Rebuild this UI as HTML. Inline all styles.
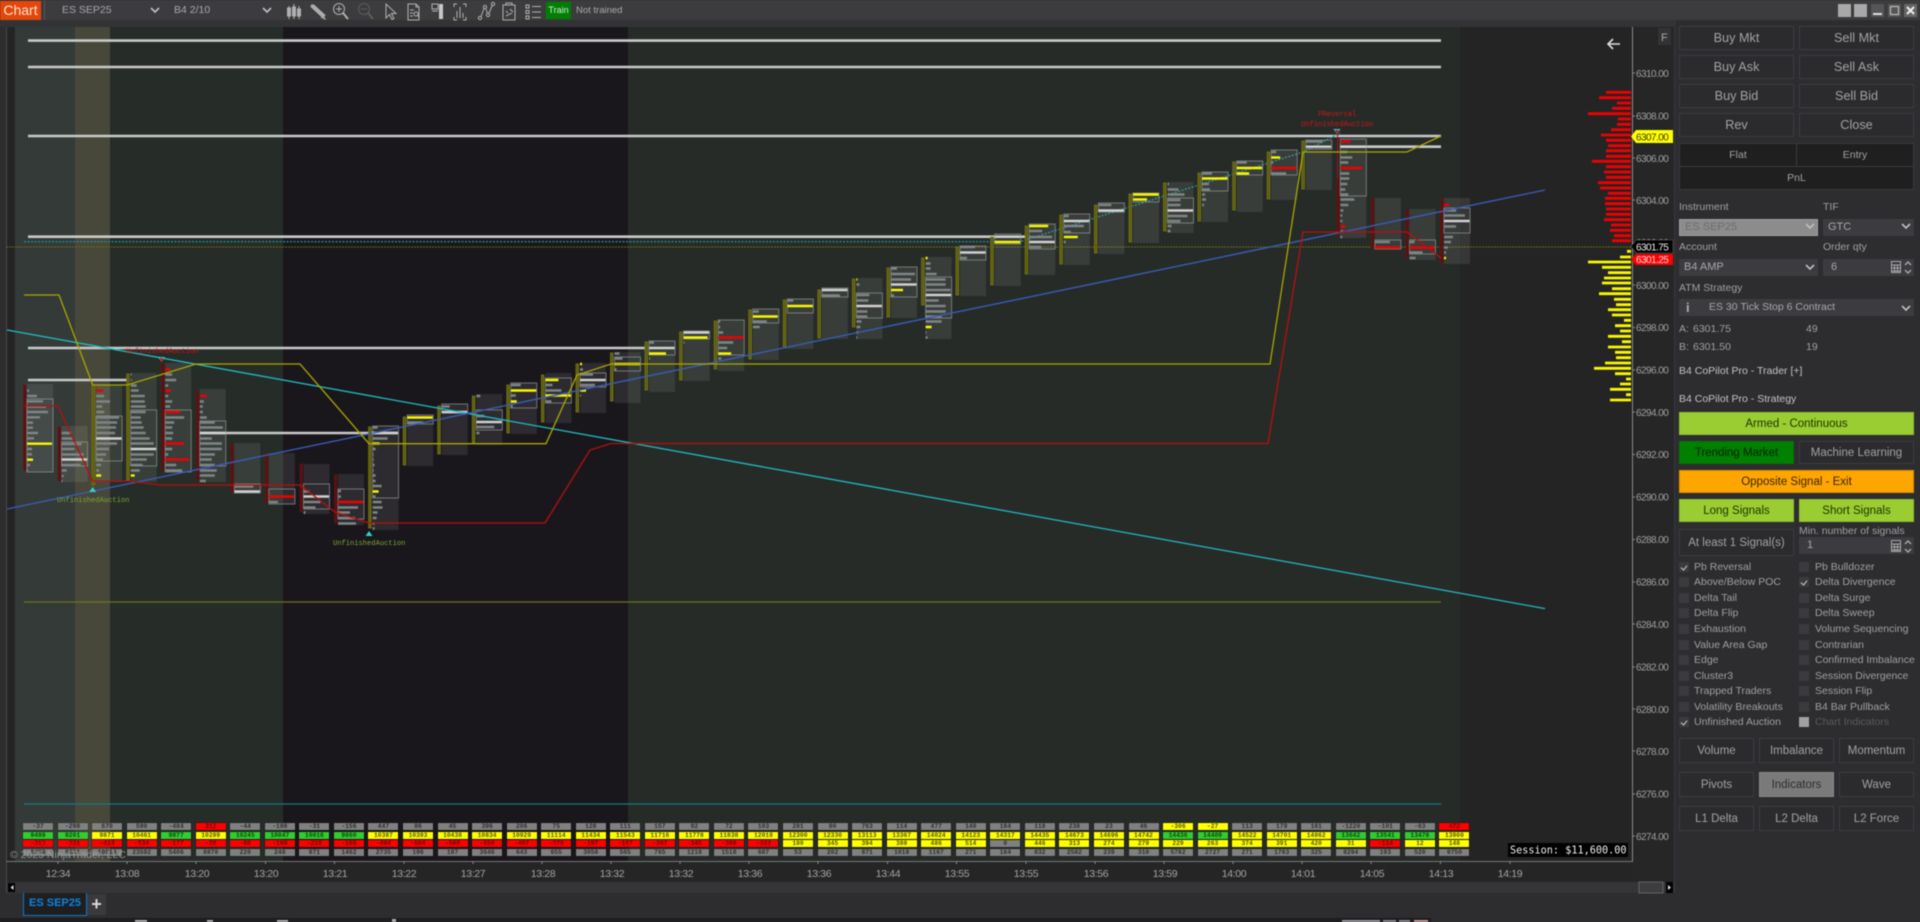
<!DOCTYPE html>
<html lang="en"><head><meta charset="utf-8"><title>Chart - ES SEP25</title>
<style>
html,body{margin:0;padding:0;background:#2d2d30;width:1920px;height:922px;overflow:hidden}
#root{position:relative;width:1920px;height:922px;overflow:hidden;font-family:"Liberation Sans",sans-serif;color:#a6a6a6;filter:blur(.45px)}
.a{position:absolute;box-sizing:border-box;white-space:nowrap}
.btn{position:absolute;box-sizing:border-box;display:flex;align-items:center;justify-content:center;background:#2b2b2e;border:1px solid #3d3d41;color:#a2a2a2;font-size:12.7px}
.s2{font-size:11.2px}
.cb{position:absolute;box-sizing:border-box;width:10px;height:10px;background:#3b3b3f}
.cb.on:after{content:"";position:absolute;left:2.5px;top:1.5px;width:3px;height:5px;border:solid #ccc;border-width:0 1.3px 1.3px 0;transform:rotate(40deg)}
.lb{position:absolute;font-size:10.5px;line-height:12px;color:#a0a0a0;white-space:nowrap}
.combo{position:absolute;box-sizing:border-box;background:#3c3c40;font-size:11px;color:#a8a8a8;line-height:16px;padding-left:5px}
.t{position:absolute;left:23px;top:823px;display:grid;grid-template-columns:repeat(42,34.56px);grid-auto-rows:8.6px}
.t i{display:block;width:30px;height:7px;font:bold 6.3px/7px "Liberation Mono",monospace;text-align:center;box-shadow:0 0 0 .5px rgba(0,0,0,.4);overflow:hidden}
.g{background:#808080;color:#2e2e2e}.n{background:#30cc30;color:#0a4a0a}.y{background:#ffff00;color:#55550a}.r{background:#ff0000;color:#6a0000}
svg text{font-family:"Liberation Sans",sans-serif}
rect.c{fill:#fff;fill-opacity:.085}
rect.b{fill:rgba(255,255,255,0);stroke:#9a9e9e;stroke-width:1;stroke-opacity:.65}
.sy{fill:#5c5c12;stroke:#77770f;stroke-width:.8}
.sr{fill:#5a1010;stroke:#701212;stroke-width:.6}
.lg,.lw,.ly,.lr{fill:none;stroke-width:2.4}
.lg{stroke:#7f8585}.lw{stroke:#d0d0d0}.ly{stroke:#f8f800}.lr{stroke:#f00000}
.pf{stroke-width:2.8}
.m{font-family:"Liberation Mono",monospace;font-size:7.1px}
.ax{font-size:10px;letter-spacing:-.55px;fill:#a0a0a0}
.tm{font-size:10.5px;letter-spacing:-.35px;fill:#a4a4a4;text-anchor:middle}
</style></head><body><div id="root">

<!-- top bar -->
<div class="a" style="left:0;top:0;width:1920px;height:20px;background:#3c3c3e"></div>
<div class="a" style="left:0;top:20px;width:1674px;height:7px;background:#333336"></div>
<div class="a" style="left:0;top:1px;width:41px;height:19px;background:#e2470c;color:#ffe2d2;font-size:14px;line-height:19px;text-align:center">Chart</div>
<div class="a" style="left:44px;top:0;width:1px;height:20px;background:#555"></div>
<div class="combo" style="left:57px;top:3px;width:107px;height:15px;line-height:15px;font-size:10.5px">ES SEP25</div>
<div class="combo" style="left:169px;top:3px;width:107px;height:15px;line-height:15px;font-size:10.5px">B4 2/10</div>
<div class="a" style="left:546px;top:2px;width:25px;height:17px;background:#008000;color:#d8e8d8;font-size:9px;line-height:17px;text-align:center">Train</div>
<div class="a" style="left:576px;top:4px;font-size:9.5px;line-height:13px;color:#aaa">Not trained</div>

<svg class="a" style="left:0;top:0" width="1920" height="922" viewBox="0 0 1920 922">
<!-- chart background -->
<rect x="6" y="27" width="1626" height="835" fill="#242424"/>
<rect x="6" y="27" width="1" height="866" fill="#4a4a4a"/>
<rect x="15" y="27" width="60" height="835" fill="#343a38"/>
<rect x="75" y="27" width="35" height="835" fill="#47483a"/>
<rect x="110" y="27" width="173" height="835" fill="#262c28"/>
<rect x="283" y="27" width="345" height="835" fill="#1a171c"/>
<rect x="628" y="27" width="832" height="835" fill="#262b28"/>
<rect x="1633" y="27" width="41" height="866" fill="#262626"/>
<rect x="7" y="862" width="1626" height="20" fill="#252525"/>
<rect x="7" y="882" width="1667" height="11" fill="#353537"/>
<rect x="1632" y="27" width="1" height="835" fill="#8a8a8a"/>
<rect x="6" y="861" width="1627" height="1" fill="#777"/>
<rect x="1674" y="20" width="1" height="873" fill="#3a3a3d"/>

<!-- long lines -->
<g stroke="#c9c9c9" stroke-width="2.6" fill="none">
<path d="M28 40.6H1441M28 67H1441M28 136H1441M1340 146.7H1441M28 236.7H1027M28 348H647M28 380H128M200 433H398"/>
</g>
<path d="M24 241.7H1020L1303 152L1340 133" stroke="#1f8a8a" stroke-width="1.4" stroke-dasharray="2 1.5" fill="none"/>
<path d="M6 247H1632" stroke="#6a6a12" stroke-width="1" stroke-dasharray="2 1"/>
<path d="M24 602H1441" stroke="#6d701f" stroke-width="1.2"/>
<path d="M24 804H1441" stroke="#127a78" stroke-width="1.3"/>

<!-- footprint bars -->
<g transform="translate(27)"><rect class="c" y="384" width="26" height="88"/><rect class="b" y="399" width="26" height="73"/><rect class="sr" x="-3.5" y="385" width="2.4" height="85"/><path class="lg" d="M0 390.7h2M0 396h10M0 401.3h16M0 406.7h19M0 412h21M0 417.3h13M0 422.7h6M0 427.7h6M0 433h11M0 438.3h7M0 449h5M0 454.3h5M0 465h3M0 470.3h1"/><path class="ly" d="M0 443.7h25M0 459.7h6"/></g>
<g transform="translate(61.6)"><rect class="c" y="426" width="26" height="56"/><rect class="b" y="442" width="26" height="24"/><rect class="sr" x="-3.5" y="427" width="2.4" height="54"/><path class="lg" d="M0 433h10M0 438.5h12M0 444h20M0 449h13M0 454.5h22M0 465h19M0 470.5h5M0 476h2M0 481h1"/><path class="lw" d="M0 459.5h25.5"/></g>
<g transform="translate(96.1)"><rect class="c" y="385" width="26" height="97"/><rect class="b" y="416" width="26" height="45"/><rect class="sy" x="-4" y="385" width="2.6" height="100"/><path class="lg" d="M0 396h8M0 401.5h14M0 406.5h6M0 412h8M0 417.5h23M0 422.5h21M0 427.5h20M0 433h19M0 443.5h21M0 449h13M0 454.5h10M0 459.5h7M0 465h5M0 470.5h3"/><path class="lr" d="M0 390.5h7"/><path class="lw" d="M0 438.5h25.5"/><path class="ly" d="M0 475.5h5"/></g>
<g transform="translate(130.7)"><rect class="c" y="373" width="26" height="109"/><rect class="b" y="410" width="26" height="56"/><rect class="sy" x="-4" y="374" width="2.6" height="106"/><path class="lg" d="M0 374.5h1M0 380h1M0 385.5h6M0 390.5h8M0 396h14M0 401.5h14M0 406.5h15M0 412h15M0 417.5h10M0 422.5h11M0 427.5h13M0 433h15M0 438.5h19M0 443.5h23M0 454.5h23M0 459.5h16M0 465h12M0 470.5h9"/><path class="lw" d="M0 449h25.5"/><path class="ly" d="M0 475.5h4"/></g>
<g transform="translate(165.2)"><rect class="c" y="363" width="26" height="109"/><rect class="b" y="410" width="26" height="62"/><rect class="sr" x="-3.5" y="363" width="2.4" height="107"/><path class="lg" d="M0 374.5h7M0 380h11M0 385.5h3M0 396h3M0 401.5h7M0 406.5h5M0 417.5h19M0 422.5h9M0 427.5h7M0 433h8M0 438.5h7M0 449h7M0 454.5h3M0 465h11M0 470.5h17"/><path class="lr" d="M0 369.5h5M0 390.5h6M0 412h15M0 443.5h19M0 459.5h24"/></g>
<g transform="translate(199.8)"><rect class="c" y="389" width="26" height="93"/><rect class="b" y="421" width="26" height="45"/><rect class="sr" x="-3.5" y="391" width="2.4" height="90"/><path class="lg" d="M0 401.5h4M0 406.5h3M0 412h3M0 417.5h7M0 422.5h15M0 427.5h23M0 438.5h12M0 443.5h22M0 449h22M0 454.5h15M0 459.5h12M0 465h15M0 470.5h17M0 475.5h15M0 481h6"/><path class="lr" d="M0 396h7"/><path class="lw" d="M0 433h25.5"/></g>
<g transform="translate(234.4)"><rect class="c" y="443" width="26" height="50"/><rect class="b" y="484" width="26" height="9"/><rect class="sr" x="-3.5" y="443" width="2.4" height="49"/><path class="lg" d="M0 486.5h19"/><path class="lw" d="M0 491.5h25.5"/></g>
<g transform="translate(268.9)"><rect class="c" y="453" width="26" height="51"/><rect class="b" y="489" width="26" height="15"/><rect class="sr" x="-3.5" y="454" width="2.4" height="48"/><path class="lg" d="M0 502h9"/><path class="lr" d="M0 496.5h25.5"/></g>
<g transform="translate(303.5)"><rect class="c" y="464" width="26" height="50"/><rect class="b" y="484" width="26" height="25"/><rect class="sr" x="-3.5" y="464" width="2.4" height="48"/><path class="lg" d="M0 491.5h6M0 502h17M0 507.5h12M0 512.5h2"/><path class="lw" d="M0 496.5h25.5"/></g>
<g transform="translate(338)"><rect class="c" y="474" width="26" height="51"/><rect class="b" y="489" width="26" height="30"/><rect class="sr" x="-3.5" y="475" width="2.4" height="48"/><path class="lg" d="M0 491h3M0 496.5h3M0 507.5h20M0 512.5h12M0 518h17M0 523.5h18"/><path class="lr" d="M0 502h25.5"/></g>
<g transform="translate(372.6)"><rect class="c" y="426" width="26" height="104"/><rect class="b" y="426" width="26" height="72"/><rect class="sy" x="-4" y="427" width="2.6" height="101"/><path class="lg" d="M0 427.5h5M0 438.5h15M0 449h3M0 454.5h1M0 459.5h1M0 465h2M0 470.5h1M0 475.5h3M0 481h3M0 486h9M0 496.5h3M0 502h9M0 507.5h10M0 512.5h5M0 518h4M0 523.5h2M0 528.5h2"/><path class="lw" d="M0 433h25.5"/><path class="ly" d="M0 443.5h7M0 491.5h6"/></g>
<g transform="translate(407.2)"><rect class="c" y="415" width="26" height="51"/><rect class="b" y="415" width="26" height="9"/><rect class="sy" x="-4" y="417" width="2.6" height="48"/><path class="lg" d="M0 422.5h16"/><path class="ly" d="M0 417.5h25.5"/></g>
<g transform="translate(441.7)"><rect class="c" y="404" width="26" height="51"/><rect class="b" y="404" width="26" height="9"/><rect class="sy" x="-4" y="406" width="2.6" height="48"/><path class="lg" d="M0 406.5h8"/><path class="lw" d="M0 412h25.5"/></g>
<g transform="translate(476.3)"><rect class="c" y="394" width="26" height="51"/><rect class="b" y="410" width="26" height="20"/><rect class="sy" x="-4" y="396" width="2.6" height="47"/><path class="lg" d="M0 396h4M0 416h8M0 427h18M0 433h3"/><path class="lw" d="M0 422h25.5"/></g>
<g transform="translate(510.8)"><rect class="c" y="383" width="26" height="51"/><rect class="b" y="383" width="26" height="25"/><rect class="sy" x="-4" y="385" width="2.6" height="48"/><path class="lg" d="M0 385h10M0 395.5h5M0 406.5h2"/><path class="ly" d="M0 390.5h25.5M0 401.5h6"/></g>
<g transform="translate(545.4)"><rect class="c" y="373" width="26" height="50"/><rect class="b" y="378" width="26" height="25"/><rect class="sy" x="-4" y="375" width="2.6" height="47"/><path class="lg" d="M0 385h7M0 390.5h16M0 401.5h6"/><path class="ly" d="M0 380h13M0 395.5h25.5"/></g>
<g transform="translate(580)"><rect class="c" y="363" width="26" height="50"/><rect class="b" y="373" width="26" height="14"/><rect class="sy" x="-4" y="364" width="2.6" height="48"/><path class="lg" d="M0 369.5h3M0 374.5h13M0 385h15M0 395.5h1"/><path class="lw" d="M0 380h25.5"/><path class="ly" d="M0 364h2M0 390.5h6"/></g>
<g transform="translate(614.5)"><rect class="c" y="352" width="26" height="51"/><rect class="b" y="357" width="26" height="14"/><rect class="sy" x="-4" y="353" width="2.6" height="48"/><path class="lg" d="M0 353.5h5M0 358.5h8M0 369.5h2"/><path class="ly" d="M0 364h25.5"/></g>
<g transform="translate(649)"><rect class="c" y="341" width="26" height="51"/><rect class="b" y="341" width="26" height="14"/><rect class="sy" x="-4" y="342" width="2.6" height="48"/><path class="lg" d="M0 342.5h5M0 358.5h1"/><path class="lw" d="M0 348h25.5"/><path class="ly" d="M0 353.5h17"/></g>
<g transform="translate(683.6)"><rect class="c" y="331" width="26" height="50"/><rect class="b" y="331" width="26" height="8"/><rect class="sy" x="-4" y="332" width="2.6" height="48"/><path class="lg" d="M0 342.5h1"/><path class="lw" d="M0 332.5h25.5"/><path class="ly" d="M0 337.5h24"/></g>
<g transform="translate(718.2)"><rect class="c" y="320" width="26" height="51"/><rect class="b" y="320" width="26" height="35"/><rect class="sy" x="-4" y="321" width="2.6" height="48"/><path class="lg" d="M0 321.5h2M0 327h2M0 332.5h5M0 342.5h15M0 348h9M0 358.5h3"/><path class="lr" d="M0 337.5h25.5"/><path class="ly" d="M0 353.5h13"/></g>
<g transform="translate(752.8)"><rect class="c" y="309" width="26" height="51"/><rect class="b" y="309" width="26" height="14"/><rect class="sy" x="-4" y="310" width="2.6" height="49"/><path class="lg" d="M0 311.5h6M0 321.5h14M0 327h7"/><path class="ly" d="M0 316.5h25"/></g>
<g transform="translate(787.3)"><rect class="c" y="299" width="26" height="50"/><rect class="b" y="299" width="26" height="14"/><rect class="sy" x="-4" y="300" width="2.6" height="48"/><path class="lg" d="M0 300.5h6"/><path class="ly" d="M0 306h25.5"/></g>
<g transform="translate(821.9)"><rect class="c" y="288" width="26" height="51"/><rect class="b" y="288" width="26" height="9"/><rect class="sy" x="-4" y="290" width="2.6" height="48"/><path class="lg" d="M0 295.5h18"/><path class="lw" d="M0 290h25.5"/></g>
<g transform="translate(856.4)"><rect class="c" y="278" width="26" height="61"/><rect class="b" y="293" width="26" height="25"/><rect class="sy" x="-4" y="279" width="2.6" height="48"/><path class="lg" d="M0 284.5h3M0 295h13M0 300.5h12M0 311.5h11M0 316.5h11M0 321.5h5M0 327h4M0 332.5h2M0 337.5h1"/><path class="lw" d="M0 306h25.5"/><path class="ly" d="M0 279.5h1"/></g>
<g transform="translate(891)"><rect class="c" y="267" width="26" height="51"/><rect class="b" y="267" width="26" height="30"/><rect class="sy" x="-4" y="268" width="2.6" height="49"/><path class="lg" d="M0 268.5h6M0 274h24M0 279.5h20M0 295.5h3"/><path class="lw" d="M0 284.5h25.5"/><path class="ly" d="M0 290h12"/></g>
<g transform="translate(925.6)"><rect class="c" y="257" width="26" height="82"/><rect class="b" y="277" width="26" height="41"/><rect class="sy" x="-4" y="258" width="2.6" height="47"/><path class="lg" d="M0 263.5h5M0 268.5h5M0 274h11M0 279.5h20M0 284.5h20M0 290h25M0 300.5h13M0 306h20M0 311.5h20M0 316.5h16M0 321.5h16M0 332.5h1M0 337.5h2"/><path class="lw" d="M0 295h25.5"/><path class="ly" d="M0 258h2M0 327h6"/></g>
<g transform="translate(960)"><rect class="c" y="246" width="26" height="50"/><rect class="b" y="246" width="26" height="14"/><rect class="sy" x="-4" y="247" width="2.6" height="48"/><path class="lg" d="M0 247h15M0 258h7"/><path class="lw" d="M0 252.5h25.5"/></g>
<g transform="translate(994.7)"><rect class="c" y="234" width="26" height="52"/><rect class="b" y="234" width="26" height="10"/><rect class="sy" x="-4" y="237" width="2.6" height="48"/><path class="ly" d="M0 242h25.5"/></g>
<g transform="translate(1029.2)"><rect class="c" y="224" width="26" height="51"/><rect class="b" y="224" width="26" height="25"/><rect class="sy" x="-4" y="226" width="2.6" height="48"/><path class="lg" d="M0 231h13M0 237h23M0 247h12"/><path class="lw" d="M0 242h25.5"/><path class="ly" d="M0 226h19"/></g>
<g transform="translate(1063.8)"><rect class="c" y="214" width="26" height="51"/><rect class="b" y="214" width="26" height="19"/><rect class="sy" x="-4" y="215" width="2.6" height="49"/><path class="lg" d="M0 216h5M0 226h20M0 232h7M0 242h2"/><path class="lw" d="M0 221h25.5"/><path class="ly" d="M0 237h14"/></g>
<g transform="translate(1098.4)"><rect class="c" y="203" width="26" height="51"/><rect class="b" y="203" width="26" height="9"/><rect class="sy" x="-4" y="205" width="2.6" height="48"/><path class="lg" d="M0 205h13"/><path class="lw" d="M0 210.5h25.5"/></g>
<g transform="translate(1133)"><rect class="c" y="193" width="26" height="50"/><rect class="b" y="193" width="26" height="9"/><rect class="sy" x="-4" y="194" width="2.6" height="48"/><path class="ly" d="M0 194.5h25.5M0 199.5h14"/></g>
<g transform="translate(1167.5)"><rect class="c" y="182" width="26" height="51"/><rect class="b" y="198" width="26" height="25"/><rect class="sy" x="-4" y="183" width="2.6" height="48"/><path class="lg" d="M0 184h1.5M0 189.5h11M0 194.5h17M0 200h13M0 205h13M0 216h20M0 221h13M0 226h4M0 231h3"/><path class="lw" d="M0 210.5h25.5"/></g>
<g transform="translate(1202)"><rect class="c" y="172" width="26" height="50"/><rect class="b" y="172" width="26" height="19"/><rect class="sy" x="-4" y="173" width="2.6" height="48"/><path class="lg" d="M0 173.5h10M0 184h7M0 189.5h8M0 194.5h3M0 199.5h4M0 205h2"/><path class="ly" d="M0 178.5h25.5"/></g>
<g transform="translate(1236.7)"><rect class="c" y="161" width="26" height="51"/><rect class="b" y="161" width="26" height="14"/><rect class="sy" x="-4" y="162" width="2.6" height="48"/><path class="lg" d="M0 162.5h10"/><path class="ly" d="M0 168h25.5M0 173.5h12.5"/></g>
<g transform="translate(1271.2)"><rect class="c" y="150" width="26" height="50"/><rect class="b" y="150" width="26" height="25"/><rect class="sy" x="-4" y="152" width="2.6" height="47"/><path class="lg" d="M0 152h5M0 162.5h2M0 173.5h15"/><path class="ly" d="M0 157.5h9"/><path class="lr" d="M0 168h25.5"/></g>
<g transform="translate(1305.8)"><rect class="c" y="140" width="26" height="50"/><rect class="b" y="140" width="26" height="9"/><rect class="sy" x="-4" y="141" width="2.6" height="48"/><path class="lg" d="M0 141.5h17"/><path class="lw" d="M0 146.7h25.5"/></g>
<g transform="translate(1340.3)"><rect class="c" y="139" width="26" height="99"/><rect class="b" y="139" width="26" height="57"/><rect x="-3.2" y="130" width="1" height="48" fill="#a01010"/><rect class="sr" x="-3.5" y="178" width="2.4" height="58"/><path class="lg" d="M0 152h7M0 157.5h12M0 162.5h8M0 173.5h9M0 178.5h9M0 184h7M0 189.5h5M0 194.5h8M0 199.5h14M0 205h8M0 210.5h3M0 215.5h2M0 221h2M0 231.5h3M0 237h2"/><path class="lr" d="M0 141.5h10M0 168h22M0 226.5h5"/><path class="lw" d="M0 146.7h25.5"/></g>
<g transform="translate(1374.9)"><rect class="c" y="198" width="26" height="51"/><rect class="b" y="240" width="26" height="9"/><rect class="sr" x="-3.5" y="199" width="2.4" height="49"/><path class="lg" d="M0 242h15"/><path class="lr" d="M0 247.5h25.5"/></g>
<g transform="translate(1409.5)"><rect class="c" y="209" width="26" height="51"/><rect class="b" y="240" width="26" height="14"/><rect class="sr" x="-3.5" y="210" width="2.4" height="48"/><path class="lg" d="M0 242h5M0 252.5h13M0 258h6"/><path class="lr" d="M0 247.5h25.5"/></g>
<g transform="translate(1444)"><rect class="c" y="198" width="26" height="66"/><rect class="b" y="208" width="26" height="25"/><rect class="sr" x="-3.5" y="199" width="2.4" height="64"/><path class="lg" d="M0 210.5h12M0 215.5h21M0 226.5h12M0 237h9M0 242h7M0 247.5h4M0 252.5h2"/><path class="lw" d="M0 221h25.5"/><path class="lr" d="M0 205h5"/><path class="ly" d="M0 258h2"/></g>

<!-- poly lines -->
<path d="M7 330L1545 608.6" stroke="#1fbcc4" stroke-width="1.3" fill="none"/>
<path d="M7 509L1545 190" stroke="#3a5cb8" stroke-width="1.4" fill="none"/>
<path d="M24 295H59L92.7 385H127L196 364H300L369 443.7H546L577 375L611 364H1270L1303 152H1407L1441 136" stroke="#aaa600" stroke-width="1.3" fill="none"/>
<path d="M24 406H58L92.7 481H127L161 485H300L335 512L369 523H545L590 450L611 443.5H1268L1303 232H1407L1441 258" stroke="#b80f0f" stroke-width="1.3" fill="none"/>

<!-- markers -->
<path d="M92.7 487l3.5 5h-7zM369 531l3.5 5h-7z" fill="#35d0c8"/>
<path d="M158 357h7l-3.5 5zM1333.5 129h7l-3.5 5z" fill="#35d0d8"/>
<path d="M159.5 358h4l-2 4zM1335 130h4l-2 4z" fill="#d01010"/>
<text class="m" x="57" y="502" fill="#7aa832">UnfinishedAuction</text>
<text class="m" x="333" y="545" fill="#7aa832">UnfinishedAuction</text>
<text class="m" x="126" y="353" fill="#d01515">UnfinishedAuction</text>
<text class="m" x="1318" y="116" fill="#d01515">PReversal</text>
<text class="m" x="1301" y="126" fill="#d01515">UnfinishedAuction</text>

<!-- back arrow -->
<path d="M1620 44h-12M1613 39l-5 5 5 5" stroke="#ddd" stroke-width="1.6" fill="none"/>

<!-- volume profile -->
<path class="lr pf" d="M1631 92.3h-25M1631 97.7h-32M1631 103h-14M1631 108.3h-19M1631 113.7h-43M1631 119h-13M1631 124.3h-14M1631 129.7h-20M1631 135h-30M1631 140.3h-25M1631 145.7h-23M1631 150.7h-25M1631 156.3h-25M1631 161.3h-39M1631 166.7h-25M1631 172h-27M1631 177.3h-25M1631 182.7h-33M1631 188h-31M1631 193.3h-23M1631 198.3h-26M1631 203.7h-26M1631 209h-25M1631 214.3h-25M1631 219.7h-27M1631 225h-20M1631 230.3h-21M1631 235.7h-17M1631 240.7h-19"/>
<path class="ly pf" d="M1631 251.3h-4M1631 257h-11M1631 262h-43M1631 267.3h-29M1631 272.7h-23M1631 278h-27M1631 283h-29M1631 288.7h-19M1631 293.7h-32M1631 299.3h-17M1631 304.7h-15M1631 309.7h-23M1631 315h-19M1631 320.3h-7M1631 325.7h-16M1631 331h-11M1631 336.3h-23M1631 341.7h-9M1631 347h-23M1631 352.3h-16M1631 357.7h-15M1631 363h-26M1631 368.3h-37M1631 373.7h-16M1631 379h-5M1631 384h-11M1631 389.3h-21M1631 394.7h-5M1631 400h-21"/>

<!-- price axis -->
<g stroke="#888" stroke-width="1"><path d="M1632 73h3M1632 116h3M1632 158h3M1632 200h3M1632 243h3M1632 285h3M1632 327.5h3M1632 370h3M1632 412h3M1632 454.5h3M1632 497h3M1632 539.5h3M1632 582h3M1632 624h3M1632 667h3M1632 709h3M1632 751h3M1632 794h3M1632 836h3"/></g>
<text class="ax" x="1636" y="77">6310.00</text><text class="ax" x="1636" y="119.5">6308.00</text><text class="ax" x="1636" y="162">6306.00</text><text class="ax" x="1636" y="204">6304.00</text><text class="ax" x="1636" y="246">6302.00</text><text class="ax" x="1636" y="289">6300.00</text><text class="ax" x="1636" y="331">6298.00</text><text class="ax" x="1636" y="373.5">6296.00</text><text class="ax" x="1636" y="416">6294.00</text><text class="ax" x="1636" y="458">6292.00</text><text class="ax" x="1636" y="500.5">6290.00</text><text class="ax" x="1636" y="543">6288.00</text><text class="ax" x="1636" y="585.5">6286.00</text><text class="ax" x="1636" y="628">6284.00</text><text class="ax" x="1636" y="670.5">6282.00</text><text class="ax" x="1636" y="713">6280.00</text><text class="ax" x="1636" y="755">6278.00</text><text class="ax" x="1636" y="797.5">6276.00</text><text class="ax" x="1636" y="840">6274.00</text>
<path d="M1631 136.5l5-6.5h37v13h-37z" fill="#ffff00"/>
<text x="1636" y="140.5" style="font-size:10px;letter-spacing:-.55px" fill="#3c3c00">6307.00</text>
<path d="M1631 246.5l5-6.5h37v13h-37z" fill="#000" stroke="#666" stroke-width=".6"/>
<text x="1636" y="250.5" style="font-size:10px;letter-spacing:-.55px" fill="#eee">6301.75</text>
<path d="M1631 259.5l5-5.5h37v11h-37z" fill="#ff0000"/>
<text x="1636" y="263" style="font-size:10px;letter-spacing:-.55px" fill="#ffdcdc">6301.25</text>
<rect x="1658" y="28" width="13" height="17" fill="#333336"/>
<text x="1661" y="41" style="font-size:11px" fill="#aaa">F</text>

<!-- time axis -->
<g stroke="#888"><path d="M58 861v3M127 861v3M196 861v3M265.5 861v3M334.5 861v3M404 861v3M473 861v3M542 861v3M611 861v3M680 861v3M749 861v3M818 861v3M887.5 861v3M956.5 861v3M1026 861v3M1095 861v3M1164 861v3M1233 861v3M1302 861v3M1371 861v3M1440.5 861v3M1510 861v3"/></g>
<text class="tm" x="58" y="877">12:34</text><text class="tm" x="127" y="877">13:08</text><text class="tm" x="197" y="877">13:20</text><text class="tm" x="266" y="877">13:20</text><text class="tm" x="335" y="877">13:21</text><text class="tm" x="404" y="877">13:22</text><text class="tm" x="473" y="877">13:27</text><text class="tm" x="543" y="877">13:28</text><text class="tm" x="612" y="877">13:32</text><text class="tm" x="681" y="877">13:32</text><text class="tm" x="750" y="877">13:36</text><text class="tm" x="819" y="877">13:36</text><text class="tm" x="888" y="877">13:44</text><text class="tm" x="957" y="877">13:55</text><text class="tm" x="1026" y="877">13:55</text><text class="tm" x="1096" y="877">13:56</text><text class="tm" x="1165" y="877">13:59</text><text class="tm" x="1234" y="877">14:00</text><text class="tm" x="1303" y="877">14:01</text><text class="tm" x="1372" y="877">14:05</text><text class="tm" x="1441" y="877">14:13</text><text class="tm" x="1510" y="877">14:19</text>

<!-- scroll -->
<rect x="8" y="883" width="7" height="9" fill="#000"/><path d="M13.5 885v5l-3-2.5z" fill="#ddd"/>
<rect x="1639" y="882" width="24" height="11" fill="#3d3d3f" stroke="#777" stroke-width=".7"/>
<rect x="1666" y="882" width="7" height="11" fill="#000"/><path d="M1668 885v5l3-2.5z" fill="#ddd"/>

<!-- session -->
<rect x="1508" y="843" width="120" height="14" fill="#000"/>
<text x="1510" y="853.5" style="font-family:'DejaVu Sans Mono','Liberation Mono',monospace;font-size:10.2px" fill="#eee">Session: $11,600.00</text>

<!-- toolbar icons -->
<g stroke="#b0b0b0" stroke-width="1" fill="none">
<path d="M289 6v13M294 4v15M299 6v13"/><rect x="287.5" y="8" width="3" height="8" fill="#b0b0b0"/><rect x="292.5" y="7" width="3" height="9" fill="#b0b0b0"/><rect x="297.5" y="9" width="3" height="7" fill="#b0b0b0"/>
<path d="M311 6l12 11M313 5l12 11M311 6l2-1" stroke-width="2"/><path d="M323 15l2 4-4-2"/>
<circle cx="339" cy="9" r="5.5"/><path d="M339 6v6M336 9h6"/><path d="M343 13l5 6" stroke-width="2"/>
<g stroke="#5c5c5c"><circle cx="364" cy="9" r="5.5"/><path d="M361 9h6"/><path d="M368 13l5 6" stroke-width="2"/></g>
<path d="M386 4v14l3.5-3.5 2.5 5 2-1-2.5-5h4.5z"/>
<path d="M408 4h8l3 3v13h-11zM416 4v3h3"/><path d="M410 10h4M410 13h3M410 16h3"/><circle cx="416" cy="14" r="2"/><path d="M417.5 15.5l2 2"/>
<path d="M432 4h6v5h-6zM432 11h6"/><rect x="439" y="4" width="4" height="15" fill="#c8c8c8" stroke="none"/>
<path d="M454 7V4h3M466 7V4h-3M454 17v3h3M466 17v3h-3M457 18V11M460 18V7M463 18v-5"/>
<circle cx="480" cy="18" r="1.6"/><circle cx="485" cy="7" r="1.6"/><circle cx="488" cy="15" r="1.6"/><circle cx="493" cy="4" r="1.6"/><path d="M481 16.5l3-8M486 9l1.5 4.5M488.8 13.5l3.4-8"/>
<rect x="503" y="5" width="12" height="15"/><path d="M506 5V3h6v2M506 11l2 2M510 9l3 3M506 16l6-3"/>
<path d="M526 5h3v3h-3zM526 10.5h3v3h-3zM526 16h3v3h-3zM532 6.5h9M532 12h9M532 17.5h9"/>
</g>

<!-- window controls -->
<rect x="1838" y="4" width="13" height="13" fill="#a8a8a8"/><rect x="1854" y="4" width="13" height="13" fill="#a8a8a8"/>
<rect x="1871" y="4" width="13" height="13" fill="#555"/><path d="M1873 14h9" stroke="#ddd" stroke-width="2"/>
<rect x="1888" y="4" width="13" height="13" fill="#555"/><rect x="1890.5" y="6.5" width="8" height="8" fill="none" stroke="#bbb" stroke-width="1.2"/>
<rect x="1904" y="4" width="13" height="13" fill="#666"/><path d="M1907 7l7 7M1914 7l-7 7" stroke="#eee" stroke-width="2"/>

<!-- bottom bits -->
<rect x="0" y="918" width="1431" height="4" fill="#1e1e1f"/>
<g fill="#b0b0b0"><rect x="135" y="920" width="12" height="2"/><rect x="207" y="920" width="6" height="2"/><rect x="277" y="920" width="11" height="2"/><rect x="392" y="919" width="4" height="3"/><rect x="1342" y="920" width="38" height="2" fill="#999"/><rect x="1383" y="920" width="13" height="2" fill="#888"/><rect x="1399" y="920" width="11" height="2" fill="#888"/><rect x="1414" y="920" width="14" height="2" fill="#c99"/></g>
</svg>

<!-- tabs -->
<div class="a" style="left:23px;top:893px;width:64px;height:23px;background:#1f1f20;border:1px solid #0a78d0;border-top:0;color:#0a84e0;font-weight:bold;font-size:11px;line-height:20px;text-align:center">ES SEP25</div>
<div class="a" style="left:87px;top:894px;width:19px;height:21px;background:#3a3a3c;color:#d8d8d8;font-size:18px;line-height:20px;text-align:center;font-weight:bold">+</div>

<!-- data table -->
<div class="t">
<i class="g">-37</i><i class="g">-298</i><i class="g">670</i><i class="g">590</i><i class="g">-484</i><i class="r">312</i><i class="g">-44</i><i class="g">-198</i><i class="g">-31</i><i class="g">-156</i><i class="g">447</i><i class="g">86</i><i class="g">45</i><i class="g">396</i><i class="g">206</i><i class="g">75</i><i class="g">128</i><i class="g">111</i><i class="g">157</i><i class="g">92</i><i class="g">72</i><i class="g">103</i><i class="g">281</i><i class="g">90</i><i class="g">763</i><i class="g">114</i><i class="g">477</i><i class="g">140</i><i class="g">184</i><i class="g">118</i><i class="g">238</i><i class="g">23</i><i class="g">46</i><i class="y">-306</i><i class="y">-27</i><i class="g">113</i><i class="g">179</i><i class="g">161</i><i class="g">-1220</i><i class="g">-101</i><i class="g">-63</i><i class="r">472</i>
<i class="n">9499</i><i class="n">9201</i><i class="y">9871</i><i class="y">10461</i><i class="n">9977</i><i class="y">10289</i><i class="n">10245</i><i class="n">10047</i><i class="n">10016</i><i class="n">9860</i><i class="y">10387</i><i class="y">10393</i><i class="y">10438</i><i class="y">10834</i><i class="y">10929</i><i class="y">11114</i><i class="y">11434</i><i class="y">11543</i><i class="y">11716</i><i class="y">11778</i><i class="y">11838</i><i class="y">12019</i><i class="y">12300</i><i class="y">12330</i><i class="y">13113</i><i class="y">13367</i><i class="y">14024</i><i class="y">14123</i><i class="y">14317</i><i class="y">14435</i><i class="y">14673</i><i class="y">14696</i><i class="y">14742</i><i class="n">14436</i><i class="n">14409</i><i class="y">14522</i><i class="y">14701</i><i class="y">14862</i><i class="n">13642</i><i class="n">13541</i><i class="n">13478</i><i class="y">13900</i>
<i class="r">-313</i><i class="r">-331</i><i class="r">-413</i><i class="r">-534</i><i class="r">-177</i><i class="r">-28</i><i class="r">-88</i><i class="r">-169</i><i class="r">-219</i><i class="r">-165</i><i class="r">-484</i><i class="r">-564</i><i class="r">-509</i><i class="r">-550</i><i class="r">-407</i><i class="r">-378</i><i class="r">-197</i><i class="r">-167</i><i class="r">-387</i><i class="r">-345</i><i class="r">-390</i><i class="r">-323</i><i class="y">180</i><i class="y">345</i><i class="y">394</i><i class="y">388</i><i class="y">486</i><i class="y">514</i><i class="g">0</i><i class="y">446</i><i class="y">313</i><i class="y">274</i><i class="y">279</i><i class="y">229</i><i class="y">263</i><i class="y">374</i><i class="y">391</i><i class="y">420</i><i class="y">31</i><i class="r">-114</i><i class="y">12</i><i class="y">148</i>
<i class="g">8499</i><i class="g">6381</i><i class="g">10914</i><i class="g">23592</i><i class="g">5406</i><i class="g">8870</i><i class="g">220</i><i class="g">248</i><i class="g">971</i><i class="g">1462</i><i class="g">2735</i><i class="g">196</i><i class="g">197</i><i class="g">3646</i><i class="g">643</i><i class="g">655</i><i class="g">3058</i><i class="g">565</i><i class="g">765</i><i class="g">1218</i><i class="g">1518</i><i class="g">687</i><i class="g">53</i><i class="g">202</i><i class="g">871</i><i class="g">1018</i><i class="g">1167</i><i class="g">271</i><i class="g">184</i><i class="g">832</i><i class="g">2582</i><i class="g">239</i><i class="g">310</i><i class="g">5782</i><i class="g">2727</i><i class="g">271</i><i class="g">1783</i><i class="g">325</i><i class="g">8294</i><i class="g">193</i><i class="g">520</i><i class="g">9750</i>
</div>
<div class="a" style="left:10px;top:849px;font-size:10.5px;line-height:12px;color:#a8a8a8;opacity:.8">© 2025 NinjaTrader, LLC</div>

<!-- right panel -->
<div class="btn" style="left:1679px;top:26px;width:115px;height:24px">Buy Mkt</div>
<div class="btn" style="left:1799px;top:26px;width:115px;height:24px">Sell Mkt</div>
<div class="btn" style="left:1679px;top:55px;width:115px;height:24px">Buy Ask</div>
<div class="btn" style="left:1799px;top:55px;width:115px;height:24px">Sell Ask</div>
<div class="btn" style="left:1679px;top:84px;width:115px;height:24px">Buy Bid</div>
<div class="btn" style="left:1799px;top:84px;width:115px;height:24px">Sell Bid</div>
<div class="btn" style="left:1679px;top:113px;width:115px;height:24px">Rev</div>
<div class="btn" style="left:1799px;top:113px;width:115px;height:24px">Close</div>

<div class="btn s2" style="left:1679px;top:143px;width:118px;height:24px;background:#1f1f20;border-color:#3a3a3d;font-size:10.5px">Flat</div>
<div class="btn s2" style="left:1796px;top:143px;width:118px;height:24px;background:#1f1f20;border-color:#3a3a3d;font-size:10.5px">Entry</div>
<div class="btn s2" style="left:1679px;top:166px;width:235px;height:24px;background:#1f1f20;border-color:#3a3a3d;font-size:10.5px">PnL</div>

<div class="lb" style="left:1679px;top:201px">Instrument</div>
<div class="lb" style="left:1823px;top:201px">TIF</div>
<div class="combo" style="left:1679px;top:219px;width:139px;height:17px;background:#8c8c8c;color:#6e6e6e;border:1px solid #a0a0a0;line-height:15px">ES SEP25</div>
<div class="combo" style="left:1823px;top:219px;width:91px;height:17px">GTC</div>
<div class="lb" style="left:1679px;top:241px">Account</div>
<div class="lb" style="left:1823px;top:241px">Order qty</div>
<div class="combo" style="left:1679px;top:259px;width:139px;height:17px">B4 AMP</div>
<div class="combo" style="left:1823px;top:259px;width:91px;height:17px;padding-left:8px">6</div>
<div class="lb" style="left:1679px;top:282px">ATM Strategy</div>
<div class="combo" style="left:1679px;top:299px;width:235px;height:17px;padding-left:30px;font-size:10.5px;line-height:17px">ES 30 Tick Stop 6 Contract</div>
<div class="a" style="left:1686px;top:299px;font-size:13px;line-height:17px;font-weight:bold;color:#b0b0b0">i</div>

<div class="lb" style="left:1679px;top:323px">A:</div><div class="lb" style="left:1693px;top:323px">6301.75</div><div class="lb" style="left:1806px;top:323px">49</div>
<div class="lb" style="left:1679px;top:341px">B:</div><div class="lb" style="left:1693px;top:341px">6301.50</div><div class="lb" style="left:1806px;top:341px">19</div>
<div class="lb" style="left:1679px;top:365px;color:#c4c4c4">B4 CoPilot Pro - Trader [+]</div>
<div class="lb" style="left:1679px;top:393px;color:#c4c4c4">B4 CoPilot Pro - Strategy</div>

<div class="btn" style="left:1679px;top:412px;width:235px;height:23px;background:#9acd32;border-color:#8fbc30;color:#1d3300;font-size:11.5px">Armed - Continuous</div>
<div class="btn" style="left:1679px;top:441px;width:115px;height:23px;background:#008000;border-color:#0a700a;color:#012001;font-size:11.5px">Trending Market</div>
<div class="btn" style="left:1799px;top:441px;width:115px;height:23px;font-size:11.5px">Machine Learning</div>
<div class="btn" style="left:1679px;top:470px;width:235px;height:23px;background:#ffa500;border-color:#e09000;color:#3a2400;font-size:11.5px">Opposite Signal - Exit</div>
<div class="btn" style="left:1679px;top:499px;width:115px;height:23px;background:#9acd32;border-color:#8fbc30;color:#1d3300;font-size:11.5px">Long Signals</div>
<div class="btn" style="left:1799px;top:499px;width:115px;height:23px;background:#9acd32;border-color:#8fbc30;color:#1d3300;font-size:11.5px">Short Signals</div>
<div class="btn" style="left:1679px;top:529px;width:115px;height:27px;font-size:11.5px">At least 1 Signal(s)</div>
<div class="lb" style="left:1799px;top:525px">Min. number of signals</div>
<div class="combo" style="left:1799px;top:537px;width:115px;height:17px;padding-left:8px;line-height:17px">1</div>

<div class="cb on" style="left:1679px;top:562px"></div><div class="lb" style="left:1694px;top:561px">Pb Reversal</div>
<div class="cb" style="left:1679px;top:577px"></div><div class="lb" style="left:1694px;top:576px">Above/Below POC</div>
<div class="cb" style="left:1679px;top:593px"></div><div class="lb" style="left:1694px;top:592px">Delta Tail</div>
<div class="cb" style="left:1679px;top:608px"></div><div class="lb" style="left:1694px;top:607px">Delta Flip</div>
<div class="cb" style="left:1679px;top:624px"></div><div class="lb" style="left:1694px;top:623px">Exhaustion</div>
<div class="cb" style="left:1679px;top:640px"></div><div class="lb" style="left:1694px;top:639px">Value Area Gap</div>
<div class="cb" style="left:1679px;top:655px"></div><div class="lb" style="left:1694px;top:654px">Edge</div>
<div class="cb" style="left:1679px;top:671px"></div><div class="lb" style="left:1694px;top:670px">Cluster3</div>
<div class="cb" style="left:1679px;top:686px"></div><div class="lb" style="left:1694px;top:685px">Trapped Traders</div>
<div class="cb" style="left:1679px;top:702px"></div><div class="lb" style="left:1694px;top:701px">Volatility Breakouts</div>
<div class="cb on" style="left:1679px;top:717px"></div><div class="lb" style="left:1694px;top:716px">Unfinished Auction</div>

<div class="cb" style="left:1799px;top:562px"></div><div class="lb" style="left:1815px;top:561px">Pb Bulldozer</div>
<div class="cb on" style="left:1799px;top:577px"></div><div class="lb" style="left:1815px;top:576px">Delta Divergence</div>
<div class="cb" style="left:1799px;top:593px"></div><div class="lb" style="left:1815px;top:592px">Delta Surge</div>
<div class="cb" style="left:1799px;top:608px"></div><div class="lb" style="left:1815px;top:607px">Delta Sweep</div>
<div class="cb" style="left:1799px;top:624px"></div><div class="lb" style="left:1815px;top:623px">Volume Sequencing</div>
<div class="cb" style="left:1799px;top:640px"></div><div class="lb" style="left:1815px;top:639px">Contrarian</div>
<div class="cb" style="left:1799px;top:655px"></div><div class="lb" style="left:1815px;top:654px">Confirmed Imbalance</div>
<div class="cb" style="left:1799px;top:671px"></div><div class="lb" style="left:1815px;top:670px">Session Divergence</div>
<div class="cb" style="left:1799px;top:686px"></div><div class="lb" style="left:1815px;top:685px">Session Flip</div>
<div class="cb" style="left:1799px;top:702px"></div><div class="lb" style="left:1815px;top:701px">B4 Bar Pullback</div>
<div class="cb" style="left:1799px;top:717px;background:#a0a0a0"></div><div class="lb" style="left:1815px;top:716px;color:#5a5a5a">Chart Indicators</div>

<div class="btn" style="left:1679px;top:738px;width:75px;height:25px;font-size:11.5px">Volume</div>
<div class="btn" style="left:1759px;top:738px;width:75px;height:25px;font-size:11.5px">Imbalance</div>
<div class="btn" style="left:1839px;top:738px;width:75px;height:25px;font-size:11.5px">Momentum</div>
<div class="btn" style="left:1679px;top:772px;width:75px;height:25px;font-size:11.5px">Pivots</div>
<div class="btn" style="left:1759px;top:772px;width:75px;height:25px;font-size:11.5px;background:#7a7a7a;border-color:#888;color:#2e2e2e">Indicators</div>
<div class="btn" style="left:1839px;top:772px;width:75px;height:25px;font-size:11.5px">Wave</div>
<div class="btn" style="left:1679px;top:806px;width:75px;height:25px;font-size:11.5px">L1 Delta</div>
<div class="btn" style="left:1759px;top:806px;width:75px;height:25px;font-size:11.5px">L2 Delta</div>
<div class="btn" style="left:1839px;top:806px;width:75px;height:25px;font-size:11.5px">L2 Force</div>

<!-- overlay: chevrons and spinners above combos -->
<svg class="a" style="left:0;top:0;pointer-events:none" width="1920" height="922" viewBox="0 0 1920 922">
<path d="M151 8l4 4 4-4M263 8l4 4 4-4M1806 224l4 4 4-4M1902 224l4 4 4-4M1806 265l4 4 4-4M1902 306l4 4 4-4" stroke="#c0c0c0" stroke-width="1.6" fill="none"/>
<g fill="none" stroke="#a8a8a8"><rect x="1891.5" y="261.5" width="9" height="11"/><path d="M1892 265h8M1892 268h8M1892 271h8M1894.5 265v7M1897.5 265v7"/><path d="M1905 265l3-3 3 3M1905 270l3 3 3-3" stroke-width="1.4"/>
<rect x="1891.5" y="540.5" width="9" height="11"/><path d="M1892 544h8M1892 547h8M1892 550h8M1894.5 544v7M1897.5 544v7"/><path d="M1905 544l3-3 3 3M1905 549l3 3 3-3" stroke-width="1.4"/></g>
</svg>
</div></body></html>
